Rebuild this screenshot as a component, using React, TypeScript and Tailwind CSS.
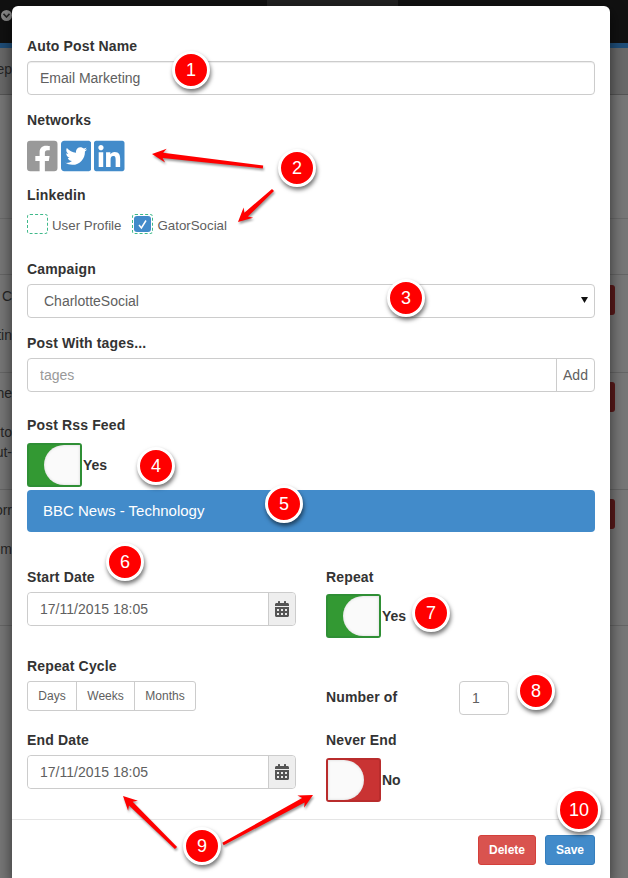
import { FaCalendarAlt, FaFacebookSquare, FaLinkedin, FaTwitterSquare } from "react-icons/fa";

const labelClass = "block h-5 text-sm leading-5 font-bold tracking-[0.15px] text-[#333]";
const inputClass =
  "block h-[34px] w-full rounded-[4px] border border-[#ccc] bg-white pl-[12px] text-sm text-[#606060] shadow-[inset_0_1px_1px_rgba(0,0,0,0.075)] outline-none";

type BgLine = { text: string; className: string };

function BgRow({ height, lines, buttonClass }: { height: string; lines: BgLine[]; buttonClass: string }) {
  return (
    <div className={`flex border-b border-[#666] ${height}`}>
      <div className="w-3 shrink-0">
        {lines.map((line) => (
          <div key={line.text} className={`flex h-5 justify-end overflow-hidden text-sm leading-5 whitespace-nowrap text-[#262626] ${line.className}`}>
            {line.text}
          </div>
        ))}
      </div>
      <div className={`ml-[598px] h-[30px] w-[5px] rounded-r-[3px] bg-[#5c1a1a] ${buttonClass}`} />
    </div>
  );
}

function Backdrop() {
  return (
    <div className="flex h-full flex-col bg-[#777]">
      <div className="relative h-[43px] bg-[#111]">
        <div className="ml-[267px] h-[6px] w-[131px] bg-[#222]" />
        <div className="absolute top-[10px] left-[1px] flex h-[11px] w-[11px] items-center justify-center rounded-full bg-[#888]">
          <svg width="7" height="5" viewBox="0 0 7 5" aria-hidden>
            <path d="M0.5 0.8 3.5 4 6.5 0.8" fill="none" stroke="#222" strokeWidth="1.6" />
          </svg>
        </div>
      </div>
      <div className="h-[5px] bg-[#1f4e79]" />
      <div className="h-[47px] border-b border-[#555] bg-[#696969]">
        <div className="mt-[11px] flex h-5 w-3 justify-end overflow-hidden text-sm leading-5 text-[#262626]">ep</div>
      </div>
      <div className="h-[124px] border-b border-[#6a6a6a]" />
      <div className="h-[56px] border-b border-[#666]" />
      <BgRow
        height="h-[98px]"
        buttonClass="mt-[10px]"
        lines={[
          { text: ". C", className: "mt-[11px]" },
          { text: "tin", className: "mt-[19px]" },
        ]}
      />
      <BgRow
        height="h-[117px]"
        buttonClass="mt-[9px]"
        lines={[
          { text: "whe", className: "mt-[10px]" },
          { text: "uto", className: "mt-[19px]" },
          { text: "ut-", className: "" },
        ]}
      />
      <BgRow
        height="h-[136px]"
        buttonClass="mt-[9px]"
        lines={[
          { text: "orr", className: "mt-[10px]" },
          { text: "-m", className: "mt-[19px]" },
        ]}
      />
    </div>
  );
}

function Toggle({ on, text }: { on: boolean; text: string }) {
  return (
    <div className="flex items-center">
      <div
        className={
          on
            ? "flex h-11 w-[55px] justify-end rounded-[3px] border-2 border-[#2f8f35] bg-[#339933]"
            : "flex h-11 w-[55px] justify-start rounded-[3px] border-2 border-[#b92c2c] bg-[#c93333]"
        }
      >
        <div
          className={
            on
              ? "h-full w-[36px] rounded-l-[20px] bg-[#fafafa] shadow-[inset_0_0_3px_rgba(0,0,0,0.15)]"
              : "h-full w-[36px] rounded-r-[20px] bg-[#fafafa] shadow-[inset_0_0_3px_rgba(0,0,0,0.15)]"
          }
        />
      </div>
      <span className="ml-[1px] text-sm font-bold text-[#333]">{text}</span>
    </div>
  );
}

function DateField() {
  return (
    <div className="mt-[5px] flex h-[34px] rounded-[4px] border border-[#ccc] text-sm text-[#606060]">
      <input readOnly value="17/11/2015 18:05" className="min-w-0 flex-1 rounded-l-[4px] bg-white pl-[12px] outline-none" />
      <div className="flex w-[27px] items-center justify-center rounded-r-[4px] border-l border-[#ccc] bg-[#eee]">
        <FaCalendarAlt className="h-[16px] w-[14px] text-[#555]" />
      </div>
    </div>
  );
}

function Checkbox({ checked, text }: { checked?: boolean; text: string }) {
  return (
    <div className="flex items-center">
      <div className="flex h-[20px] w-[21px] items-center justify-center rounded-[3px] border border-dashed border-[#3fb98a]">
        {checked && (
          <div className="flex h-[16px] w-[17px] items-center justify-center rounded-[3px] bg-[#428bca]">
            <svg width="11" height="11" viewBox="0 0 11 11" aria-hidden>
              <path d="M2 6 4.4 9 9 1.5" fill="none" stroke="white" strokeWidth="1.5" />
            </svg>
          </div>
        )}
      </div>
      <span className="mt-[4px] ml-[4px] text-[13.3px] text-[#606060]">{text}</span>
    </div>
  );
}

function Badge({ className, value }: { className: string; value: number }) {
  return (
    <div
      className={`absolute flex items-center justify-center rounded-full border-[3px] border-white bg-[#f00] text-white shadow-[1px_3px_4px_rgba(0,0,0,0.55)] ${className}`}
    >
      {value}
    </div>
  );
}

function arrowPoints(x1: number, y1: number, x2: number, y2: number) {
  const len = Math.hypot(x2 - x1, y2 - y1);
  const ux = (x2 - x1) / len;
  const uy = (y2 - y1) / len;
  const px = -uy;
  const py = ux;
  const at = (along: number, side: number) =>
    `${(x1 + ux * along + px * side).toFixed(1)},${(y1 + uy * along + py * side).toFixed(1)}`;
  const neck = len - 11;
  return [
    at(0, 1.5),
    at(neck, 2.6),
    at(neck - 3, 7),
    at(len, 0),
    at(neck - 3, -7),
    at(neck, -2.6),
    at(0, -1.5),
  ].join(" ");
}

export default function App() {
  return (
    <div className="relative h-[878px] w-[628px] overflow-hidden font-['Liberation_Sans',Arial,sans-serif]">
      <Backdrop />

      <div className="absolute top-[6px] left-[12px] w-[598px] rounded-t-[6px] bg-white shadow-[0_5px_15px_rgba(0,0,0,0.6)]">
        <div className="px-[15px] pt-[30px]">
          <label className={labelClass}>Auto Post Name</label>
          <input readOnly value="Email Marketing" className={`mt-[5px] ${inputClass}`} />

          <label className={`mt-[15px] ${labelClass}`}>Networks</label>
          <div className="mt-[8px] flex h-[36px] gap-[3px]">
            <FaFacebookSquare className="h-[36px] w-[30.5px] text-[#999]" />
            <FaTwitterSquare className="h-[36px] w-[30.5px] text-[#428bca]" />
            <FaLinkedin className="h-[36px] w-[30.5px] text-[#428bca]" />
          </div>

          <label className={`mt-[11px] ${labelClass} text-[#222]`}>Linkedin</label>
          <div className="mt-[9px] flex h-5 gap-[11px]">
            <Checkbox text="User Profile" />
            <Checkbox checked text="GatorSocial" />
          </div>

          <label className={`mt-[25px] ${labelClass}`}>Campaign</label>
          <div className="relative mt-[5px] flex h-[34px] items-center rounded-[4px] border border-[#ccc] pl-[16px] text-sm text-[#606060]">
            CharlotteSocial
            <svg className="absolute top-[12px] right-[6px]" width="7" height="6" viewBox="0 0 7 6" aria-hidden>
              <path d="M0 0H7L3.5 6Z" fill="#111" />
            </svg>
          </div>

          <label className={`mt-[15px] ${labelClass}`}>Post With tages...</label>
          <div className="mt-[5px] flex h-[34px] rounded-[4px] border border-[#ccc] text-sm">
            <input readOnly placeholder="tages" className="min-w-0 flex-1 rounded-l-[4px] pl-[12px] outline-none placeholder:text-[#999]" />
            <div className="flex w-[38px] items-center justify-center border-l border-[#ccc] text-[#606060]">Add</div>
          </div>

          <label className={`mt-[23px] ${labelClass}`}>Post Rss Feed</label>
          <div className="mt-[8px]">
            <Toggle on text="Yes" />
          </div>
          <div className="mt-[3px] flex h-[42px] items-center rounded-[4px] bg-[#428bca] pl-[16px] text-[15px] text-white">
            BBC News - Technology
          </div>

          <div className="mt-[35px] grid grid-cols-2 grid-rows-[89px_74px_auto] gap-x-[30px]">
            <div>
              <label className={labelClass}>Start Date</label>
              <DateField />
            </div>
            <div>
              <label className={labelClass}>Repeat</label>
              <div className="mt-[7px]">
                <Toggle on text="Yes" />
              </div>
            </div>
            <div>
              <label className={labelClass}>Repeat Cycle</label>
              <div className="mt-[5px] flex h-[30px] w-[169px] rounded-[3px] border border-[#ccc] text-xs text-[#606060]">
                <div className="flex w-[48px] items-center justify-center">Days</div>
                <div className="flex w-[58px] items-center justify-center border-l border-[#ccc]">Weeks</div>
                <div className="flex flex-1 items-center justify-center border-l border-[#ccc]">Months</div>
              </div>
            </div>
            <div className="flex items-start">
              <label className={`mt-[31px] w-[133px] ${labelClass}`}>Number of</label>
              <input readOnly value="1" className="mt-[25px] h-[34px] w-[50px] rounded-[4px] border border-[#ccc] pl-[12px] text-sm text-[#606060] outline-none" />
            </div>
            <div>
              <label className={labelClass}>End Date</label>
              <DateField />
            </div>
            <div>
              <label className={labelClass}>Never End</label>
              <div className="mt-[8px]">
                <Toggle on={false} text="No" />
              </div>
            </div>
          </div>
        </div>

        <div className="mt-[17px] flex justify-end gap-[9px] border-t border-[#e5e5e5] px-[15px] pt-[15px] pb-[15px] text-xs font-bold text-white">
          <div className="flex h-[30px] w-[58px] items-center justify-center rounded-[3px] border border-[#d43f3a] bg-[#d9534f]">Delete</div>
          <div className="flex h-[30px] w-[50px] items-center justify-center rounded-[3px] border border-[#357ebd] bg-[#428bca]">Save</div>
        </div>
      </div>

      <svg className="absolute inset-0 h-full w-full drop-shadow-[1px_2px_1px_rgba(0,0,0,0.4)]" viewBox="0 0 628 878" aria-hidden>
        <polygon points={arrowPoints(263, 167, 152, 154)} fill="#f00" />
        <polygon points={arrowPoints(273, 190, 238, 222)} fill="#f00" />
        <polygon points={arrowPoints(176, 848, 123, 796)} fill="#f00" />
        <polygon points={arrowPoints(223, 844, 313, 795)} fill="#f00" />
      </svg>

      <Badge value={1} className="top-[51px] left-[172px] h-[38px] w-[38px] text-[18px]" />
      <Badge value={2} className="top-[149px] left-[278px] h-[38px] w-[38px] text-[18px]" />
      <Badge value={3} className="top-[279px] left-[387px] h-[38px] w-[38px] text-[18px]" />
      <Badge value={4} className="top-[447px] left-[137px] h-[38px] w-[38px] text-[18px]" />
      <Badge value={5} className="top-[485px] left-[265px] h-[38px] w-[38px] text-[18px]" />
      <Badge value={6} className="top-[543px] left-[106px] h-[38px] w-[38px] text-[18px]" />
      <Badge value={7} className="top-[594px] left-[412px] h-[38px] w-[38px] text-[18px]" />
      <Badge value={8} className="top-[672px] left-[517px] h-[38px] w-[38px] text-[18px]" />
      <Badge value={9} className="top-[827px] left-[183px] h-[38px] w-[38px] text-[18px]" />
      <Badge value={10} className="top-[788px] left-[557px] h-[44px] w-[44px] text-[18px]" />
    </div>
  );
}
